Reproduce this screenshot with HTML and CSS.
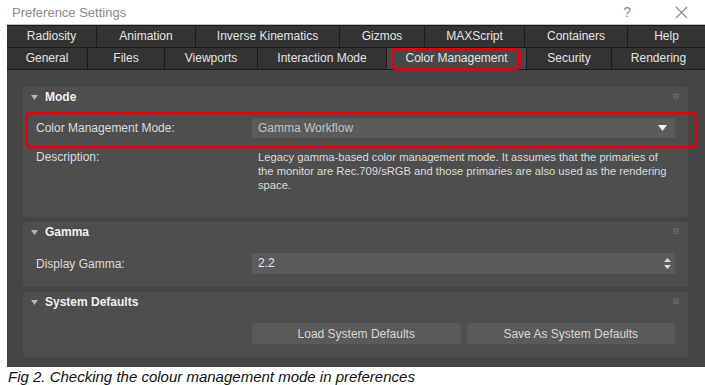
FILE: index.html
```html
<!DOCTYPE html>
<html lang="en">
<head>
    <meta charset="UTF-8">
    <title>Preference Settings</title>
    <link rel="stylesheet" href="styles.css">
</head>
<body>
    <div class="titlebar">
        <span class="title">Preference Settings</span>
        <span class="help">?</span>
        <svg class="close" width="13" height="13" viewBox="0 0 13 13">
            <path d="M1 1 L12 12 M12 1 L1 12" stroke="#8a8a8a" stroke-width="1.1" fill="none"/>
        </svg>
    </div>

    <div class="window">
        <div class="tabs tabs-top">
            <div class="tab">Radiosity</div>
            <div class="tab">Animation</div>
            <div class="tab">Inverse Kinematics</div>
            <div class="tab">Gizmos</div>
            <div class="tab">MAXScript</div>
            <div class="tab">Containers</div>
            <div class="tab">Help</div>
        </div>
        <div class="tabs tabs-bottom">
            <div class="tab">General</div>
            <div class="tab">Files</div>
            <div class="tab">Viewports</div>
            <div class="tab">Interaction Mode</div>
            <div class="tab active">Color Management</div>
            <div class="tab">Security</div>
            <div class="tab">Rendering</div>
        </div>

        <div class="content">
            <section class="panel panel-mode">
                <div class="panel-head">
                    <svg class="caret" width="7" height="5" viewBox="0 0 7 5"><path d="M0 0 H7 L3.5 5 Z" fill="#b4b4b4"/></svg>Mode
                    <span class="grip"></span>
                </div>
                <div class="row highlighted">
                    <span class="label">Color Management Mode:</span>
                    <div class="field dropdown">
                        Gamma Workflow
                        <svg class="drop-arrow" width="9" height="6" viewBox="0 0 9 6"><path d="M0 0 H9 L4.5 6 Z" fill="#eee"/></svg>
                    </div>
                </div>
                <div class="row desc-row">
                    <span class="label">Description:</span>
                    <p class="desc">Legacy gamma-based color management mode. It assumes that the primaries of the monitor are Rec.709/sRGB and those primaries are also used as the rendering space.</p>
                </div>
            </section>

            <section class="panel">
                <div class="panel-head">
                    <svg class="caret" width="7" height="5" viewBox="0 0 7 5"><path d="M0 0 H7 L3.5 5 Z" fill="#b4b4b4"/></svg>Gamma
                    <span class="grip"></span>
                </div>
                <div class="row">
                    <span class="label">Display Gamma:</span>
                    <div class="field spinner">
                        2.2
                        <svg class="spin-arrows" width="7" height="11" viewBox="0 0 7 11"><path d="M3.5 0 L7 4 H0 Z M0 7 H7 L3.5 11 Z" fill="#ddd"/></svg>
                    </div>
                </div>
            </section>

            <section class="panel">
                <div class="panel-head">
                    <svg class="caret" width="7" height="5" viewBox="0 0 7 5"><path d="M0 0 H7 L3.5 5 Z" fill="#b4b4b4"/></svg>System Defaults
                    <span class="grip"></span>
                </div>
                <div class="row">
                    <span></span>
                    <div class="buttons">
                        <button class="btn">Load System Defaults</button>
                        <button class="btn">Save As System Defaults</button>
                    </div>
                </div>
            </section>
        </div>
    </div>

    <p class="caption">Fig 2. Checking the colour management mode in preferences</p>
</body>
</html>
```

FILE: styles.css
```css
body {
    margin: 0;
    width: 705px;
    height: 385px;
    overflow: hidden;
    background-color: #fff;
    font-family: "Liberation Sans", Arial, sans-serif;
}
.titlebar {
    height: 24px;
    display: flex;
    align-items: center;
    padding-left: 12px;
    color: #8a8a8a;
    font-size: 13px;
}
.title {
    flex: 1;
}
.help {
    font-size: 14px;
    margin-right: 44px;
}
.close {
    margin-right: 17px;
}
.window {
    margin-left: 7px;
    background-color: #454545;
    height: 343px;
}
.tabs {
    display: grid;
    background-color: #1b1b1b;
    gap: 1px;
    padding-bottom: 1px;
}
.tabs-top {
    grid-template-columns: 89px 98px 143px 84px 99px 102px 1fr;
    padding-top: 1px;
    border-top: 1px solid #bdbdbd;
}
.tabs-bottom {
    grid-template-columns: 80px 76px 92px 128px 139px 84px 1fr;
}
.tab {
    height: 21px;
    line-height: 21px;
    background-color: #333;
    color: #e4e4e4;
    font-size: 12px;
    text-align: center;
    position: relative;
}
.tab.active {
    background-color: #484848;
}
.tab.active::after {
    content: "";
    position: absolute;
    left: 4px;
    right: 5px;
    top: 0;
    bottom: -2px;
    border: 3px solid #e4000f;
    border-radius: 6px;
}
.content {
    padding: 17px 17px 0 16px;
    display: flex;
    flex-direction: column;
    gap: 5px;
}
.panel {
    background-color: #4e4e4e;
    border-radius: 3px;
    padding: 0 13px 13px;
}
.panel-mode {
    padding-bottom: 25px;
}
.panel-head {
    height: 20px;
    line-height: 20px;
    color: #f0f0f0;
    font-size: 12px;
    font-weight: bold;
    display: flex;
    align-items: center;
    position: relative;
    margin-left: -5px;
}
.caret {
    margin-right: 7px;
}
.grip {
    position: absolute;
    right: -4px;
    top: 6px;
    width: 6px;
    height: 6px;
    background-image: repeating-linear-gradient(90deg, #6a6a6a 0 1px, transparent 1px 2px), repeating-linear-gradient(0deg, #6a6a6a 0 1px, transparent 1px 2px);
    opacity: 0.8;
}
.row {
    display: grid;
    grid-template-columns: 216px 1fr;
    align-items: center;
    margin-top: 11px;
    color: #dcdcdc;
    font-size: 12px;
    position: relative;
}
.highlighted::after {
    content: "";
    position: absolute;
    left: -11px;
    right: -23px;
    top: -6px;
    bottom: -11px;
    border: 3px solid #e4000f;
    border-radius: 6px;
}
.field {
    height: 20px;
    line-height: 20px;
    background-color: #5b5b5b;
    color: #c4c4c4;
    padding-left: 6px;
    position: relative;
}
.spinner {
    height: 21px;
    line-height: 21px;
    color: #e6e6e6;
}
.drop-arrow {
    position: absolute;
    right: 8px;
    top: 7px;
}
.spin-arrows {
    position: absolute;
    right: 4px;
    top: 5px;
}
.desc-row {
    align-items: start;
    margin-top: 12px;
}
.desc {
    margin: 0;
    padding-left: 6px;
    line-height: 14px;
    font-size: 11.2px;
}
.buttons {
    display: flex;
    gap: 6px;
}
.btn {
    flex: 1;
    height: 21px;
    background-color: #5a5a5a;
    border: none;
    border-radius: 3px;
    color: #d8d8d8;
    font-family: "Liberation Sans", Arial, sans-serif;
    font-size: 12px;
}
.caption {
    margin: 0;
    padding: 1px 0 0 8px;
    font-size: 15px;
    font-style: italic;
    color: #111;
}
```
